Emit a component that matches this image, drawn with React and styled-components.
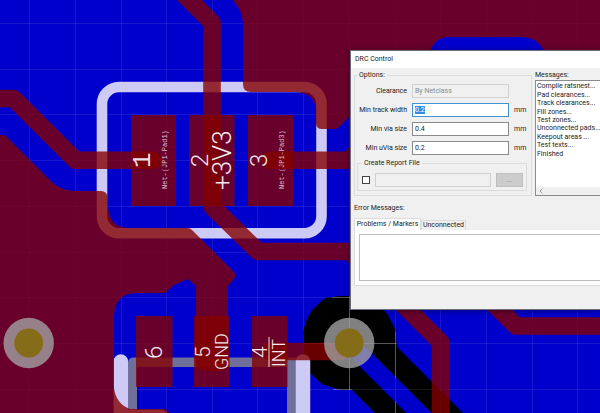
import React, { useState } from 'react';
import styled, { createGlobalStyle } from 'styled-components';

const GlobalStyle = createGlobalStyle`
  * {
    box-sizing: border-box;
  }

  body {
    margin: 0;
    background: #0000c8;
    color: #1c1c1c;
    font-family: Roboto, 'Open Sans', sans-serif;
    font-size: 7px;
    line-height: 10px;
  }
`;

const Workspace = styled.main`
  position: relative;
  min-height: 100vh;
  overflow: hidden;
`;

const BoardSvg = styled.svg`
  position: absolute;
  inset: 0;
  width: 100%;
  height: 100%;
`;

const MonoText = styled.text`
  fill: #eadfe8;
  font-family: 'Liberation Mono', monospace;
  font-size: ${({ $size }) => $size}px;
`;

const LightText = styled.text`
  fill: #f2eaf0;
  font-family: Roboto, sans-serif;
  font-weight: 300;
  font-size: ${({ $size }) => $size}px;
`;

const Dialog = styled.section`
  position: absolute;
  top: 50px;
  left: 350px;
  right: 0;
  background: #f0f0f0;
  border: 1px solid #6c6c7c;
  border-right: 0;
  box-shadow: 0 1px 6px rgba(0, 0, 0, 0.4);
`;

const TitleBar = styled.h1`
  height: 17px;
  margin: 0;
  padding: 0 4px;
  background: #ffffff;
  font-size: 7px;
  font-weight: 400;
  line-height: 17px;
`;

const Body = styled.div`
  padding: 2px 0 23px 3px;
`;

const Columns = styled.div`
  display: grid;
  grid-template-columns: 178px 1fr;
  gap: 3px;
`;

const Group = styled.fieldset`
  min-width: 0;
  margin: ${({ $nested }) => ($nested ? '3px 0 0' : '0')};
  padding: ${({ $nested }) => ($nested ? '5px 3px 3px 4px' : '4px 4px 4px 2px')};
  border: 1px solid #dcdcdc;
`;

const Legend = styled.legend`
  padding: 0 2px;
`;

const Fields = styled.div`
  display: grid;
  gap: 5px;
`;

const Field = styled.div`
  display: grid;
  grid-template-columns: 50px 97px 1fr;
  column-gap: 5px;
  align-items: center;
  height: 14px;
`;

const FieldLabel = styled.label`
  text-align: right;
  white-space: nowrap;
`;

const TextInput = styled.input`
  width: 100%;
  min-width: 0;
  height: 14px;
  padding: 0 2px;
  border: 1px solid ${({ $active }) => ($active ? '#3c94d4' : '#8a8a8a')};
  background: #ffffff;
  color: inherit;
  font: inherit;
  outline: 0;

  &::selection {
    background: #3390e8;
    color: #ffffff;
  }

  &:disabled {
    border-color: #d0d0d0;
    background: #f0f0f0;
    color: #8a8a8a;
  }
`;

const ReportRow = styled.div`
  display: grid;
  grid-template-columns: 8px 1fr 27px;
  column-gap: 5px;
  align-items: center;
`;

const CheckBox = styled.input`
  appearance: none;
  width: 8px;
  height: 8px;
  margin: 0;
  border: 1px solid #444444;
  background: #ffffff;
`;

const BrowseButton = styled.button`
  height: 14px;
  padding: 0;
  border: 1px solid #c0c0c0;
  background: #cccccc;
  color: #808080;
  font: inherit;
`;

const Messages = styled.div`
  display: flex;
  flex-direction: column;
`;

const MessageBox = styled.div`
  display: flex;
  flex: 1;
  flex-direction: column;
  justify-content: space-between;
  border: 1px solid #8a8a8a;
  border-right: 0;
  background: #ffffff;
`;

const MessageList = styled.ul`
  display: grid;
  grid-auto-rows: 1fr;
  align-items: center;
  height: 77px;
  margin: 0;
  padding: 1px 0 0 1px;
  list-style: none;
  line-height: 8px;
  white-space: nowrap;
`;

const ScrollBar = styled.div`
  display: flex;
  align-items: center;
  height: 8px;
  padding-left: 3px;
  background: #f0f0f0;
`;

const ErrorTitle = styled.h2`
  margin: 7px 0 5px;
  font-size: 7px;
  font-weight: 400;
`;

const Tabs = styled.div`
  display: flex;
  align-items: flex-end;
`;

const Tab = styled.button`
  width: ${({ $active }) => ($active ? '67px' : '45px')};
  height: ${({ $active }) => ($active ? '12px' : '10px')};
  padding: 0;
  border: 1px solid #dcdcdc;
  border-bottom: 0;
  background: ${({ $active }) => ($active ? '#ffffff' : '#f0f0f0')};
  color: inherit;
  font: inherit;
  line-height: 9px;
  white-space: nowrap;
`;

const TabPanel = styled.div`
  padding: 4px 0 4px 4px;
  border: 1px solid #dcdcdc;
  border-width: 0 0 1px 1px;
  background: #ffffff;
`;

const MarkerList = styled.div`
  height: 47px;
  border: 1px solid #bcbcbc;
  border-right: 0;
`;

const gridX = [29, 75, 121, 166, 212, 257, 303, 349, 395, 440, 486, 532, 577];
const gridY = [23, 69, 114, 160, 206, 252, 297, 343, 389];

const messages = [
  'Compile ratsnest...',
  'Pad clearances...',
  'Track clearances...',
  'Fill zones...',
  'Test zones...',
  'Unconnected pads...',
  'Keepout areas ...',
  'Test texts...',
  'Finished',
];

const Board = () => (
  <BoardSvg viewBox="0 0 600 413" preserveAspectRatio="xMinYMin slice" role="img" aria-label="Board layout">
    <rect width="600" height="413" fill="#0000cc" />

    {/* Clearance around the right hand via */}
    <g fill="#000000">
      <path d="M340 296h16l20 6 12 13 7 14 2 18 66 66h-88l-23-23h-12l-18-6-14-13-4-10-1-30 4-12 5-9 13-12z" />
      <path d="M349 343l80 80" stroke="#0000cc" strokeWidth="18" />
    </g>

    <g stroke="#ffffff" strokeOpacity="0.09">
      {gridX.map((x) => (
        <path key={x} d={`M${x + 0.5} 0V413`} />
      ))}
      {gridY.map((y) => (
        <path key={y} d={`M0 ${y + 0.5}H600`} />
      ))}
    </g>
    <path
      d="M349.5 296V390M304 343.5H396M332 297.5H358M395.5 332V378M395.5 401V413M333 389.5H352"
      stroke="#ffffff"
      strokeOpacity="0.28"
    />

    {/* Silkscreen */}
    <g fill="none">
      <rect x="102" y="87" width="219.5" height="146.2" rx="17" stroke="#cdcaf5" strokeWidth="10.6" />
      <path d="M128 413V363q0-5.500 6-5.500H296V413H287V367H137V413z" fill="#6f6f9a" />
      <path d="M120.800 361.500V420M128 417H161" stroke="#cdcaf5" strokeWidth="14.500" strokeLinecap="round" />
      <path d="M303 361.500V420" stroke="#cdcaf5" strokeWidth="14.500" strokeLinecap="round" />
    </g>

    {/* Front copper: zones and tracks */}
    <g opacity="0.787">
      <g fill="#840000">
        <path d="M233 0l5 7q5 8 5 19V84q0 8 8 8H296q20 1 20 20v11q0 6 6 6h13q3 0 5-3l30-30H600V0z" />
        <path d="M0 135h3q2 0 4 2l41 41q11 13 28 13h25q6 0 7 7v10q2 19 20 20h60q2 0 4 2l42 42q3 3 0 7l-6 7V360q0 11-11 11h-11q-10 0-10-11V286l-8-7-14 6-9 8H136q-21 1-22 22V388q2 16 16 21h35l5 4H0z" />
      </g>
      <g fill="none" stroke="#840000" strokeWidth="17.600" strokeLinecap="round" strokeLinejoin="round">
        <path d="M-10 98.500H13.500L75.500 160.200H153" />
        <path d="M180 -9.500L212 22.500V206.500L258 251.500H350L440.500 342V425" />
        <path d="M270.500 160.200H349L370 139" />
        <path d="M480 290L516 326H610" />
        <path d="M270 351.500H340L349 343" />
      </g>
    </g>
    <path d="M430 51q5-13 17-14h76q15 1 21 14z" fill="#0000cc" />

    {/* Pads */}
    <g fill="#840000" opacity="0.787">
      <rect x="131" y="115" width="45" height="91" />
      <rect x="189" y="115" width="45.500" height="91" />
      <rect x="248" y="115" width="45.500" height="91" />
      <rect x="136" y="316" width="36.500" height="71" />
      <rect x="194" y="316" width="35.500" height="71" />
      <rect x="252" y="316" width="35.500" height="71" />
    </g>

    {[28.7, 349.2].map((cx) => (
      <g key={cx}>
        <circle cx={cx} cy="343" r="25.2" fill="#a2a2a2" fillOpacity="0.79" />
        <circle cx={cx} cy="343" r="14.400" fill="#856c18" />
      </g>
    ))}

    <MonoText $size={26} transform="translate(150 168) rotate(-90)">1</MonoText>
    <LightText $size={24} transform="translate(208 167) rotate(-90)">2</LightText>
    <LightText $size={24} transform="translate(267 167) rotate(-90)">3</LightText>
    <LightText $size={24} transform="translate(162 359) rotate(-90)">6</LightText>
    <LightText $size={21} transform="translate(210 358) rotate(-90)">5</LightText>
    <LightText $size={21} transform="translate(267 358) rotate(-90)">4</LightText>
    <LightText $size={26} transform="translate(231 190) rotate(-90)">+3V3</LightText>
    <LightText $size={18} transform="translate(228 370) rotate(-90)">GND</LightText>
    <LightText $size={18} transform="translate(285 367) rotate(-90)">INT</LightText>
    <path d="M269 337V367" stroke="#eadfe8" />
    <g opacity="0.85">
      <MonoText $size={7} transform="translate(167 189) rotate(-90)">Net-(JP1-Pad1)</MonoText>
      <MonoText $size={7} transform="translate(284 189) rotate(-90)">Net-(JP1-Pad3)</MonoText>
    </g>
  </BoardSvg>
);

const NumberField = ({ id, label, value, unit, ...rest }) => (
  <Field>
    <FieldLabel htmlFor={id}>{label}</FieldLabel>
    <TextInput id={id} defaultValue={value} {...rest} />
    {unit && <span>{unit}</span>}
  </Field>
);

const DrcDialog = () => {
  const [tab, setTab] = useState('problems');

  return (
    <Dialog role="dialog" aria-labelledby="drc-title">
      <TitleBar id="drc-title">DRC Control</TitleBar>
      <Body>
        <Columns>
          <Group>
            <Legend>Options:</Legend>
            <Fields>
              <NumberField id="clearance" label="Clearance" value="By Netclass" disabled />
              <NumberField
                id="track"
                label="Min track width"
                value="0.2"
                unit="mm"
                $active
                autoFocus
                onFocus={(e) => e.target.select()}
              />
              <NumberField id="via" label="Min via size" value="0.4" unit="mm" />
              <NumberField id="uvia" label="Min uVia size" value="0.2" unit="mm" />
            </Fields>
            <Group $nested>
              <Legend>Create Report File</Legend>
              <ReportRow>
                <CheckBox type="checkbox" aria-label="Create report file" />
                <TextInput aria-label="Report file name" disabled />
                <BrowseButton type="button" disabled>
                  ...
                </BrowseButton>
              </ReportRow>
            </Group>
          </Group>
          <Messages>
            <span>Messages:</span>
            <MessageBox>
              <MessageList>
                {messages.map((message) => (
                  <li key={message}>{message}</li>
                ))}
              </MessageList>
              <ScrollBar>
                <svg width="4" height="6" viewBox="0 0 4 6" fill="none" stroke="#a0a0a0">
                  <path d="M3.500 0.500L1 3l2.500 2.500" />
                </svg>
              </ScrollBar>
            </MessageBox>
          </Messages>
        </Columns>
        <ErrorTitle>Error Messages:</ErrorTitle>
        <Tabs role="tablist">
          <Tab type="button" role="tab" $active={tab === 'problems'} onClick={() => setTab('problems')}>
            Problems / Markers
          </Tab>
          <Tab type="button" role="tab" $active={tab === 'unconnected'} onClick={() => setTab('unconnected')}>
            Unconnected
          </Tab>
        </Tabs>
        <TabPanel role="tabpanel">
          <MarkerList />
        </TabPanel>
      </Body>
    </Dialog>
  );
};

const App = () => (
  <>
    <GlobalStyle />
    <Workspace>
      <Board />
      <DrcDialog />
    </Workspace>
  </>
);

export default App;
